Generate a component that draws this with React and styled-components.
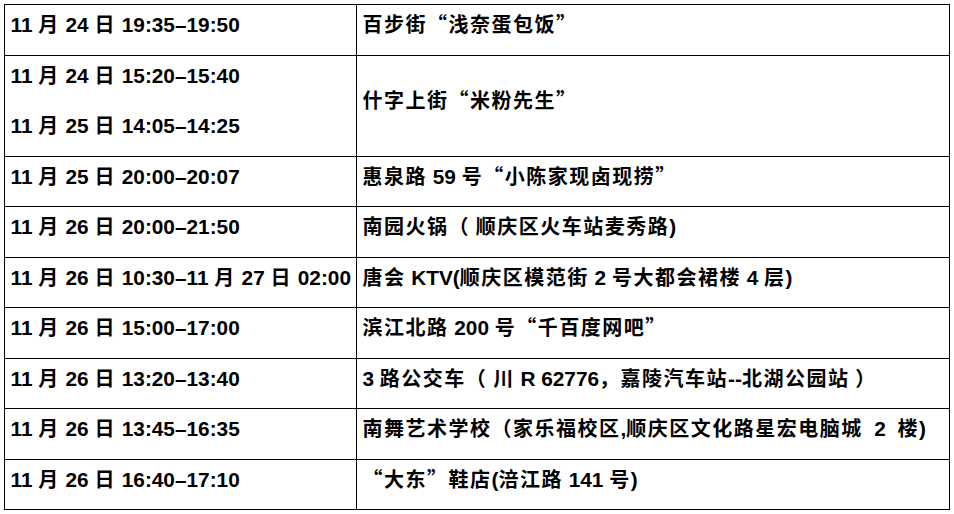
import React from 'react';
import styled, { createGlobalStyle } from 'styled-components';

const GlobalStyle = createGlobalStyle`
  html, body {
    margin: 0;
    padding: 0;
    background: #fff;
  }
  body {
    font-family: "Liberation Sans", Arial, "Noto Sans CJK SC", sans-serif;
    color: #000;
  }
`;

const Page = styled.div`
  padding: 4px;
`;

const Table = styled.div`
  width: 946px;
  box-sizing: border-box;
  border: 1px solid #000;
  border-bottom: none;
`;

const Row = styled.div`
  display: grid;
  grid-template-columns: 352px 1fr;
  height: ${(p) => p.span * 50.5}px;
  box-sizing: border-box;
  border-bottom: 1px solid #000;
`;

const Cell = styled.div`
  display: flex;
  flex-direction: column;
  justify-content: ${(p) => (p.center ? 'center' : 'flex-start')};
  box-sizing: border-box;
  padding-left: 5.5px;
  border-right: ${(p) => (p.divider ? '1px solid #000' : 'none')};
  overflow: visible;
`;

const Para = styled.div`
  height: 50px;
  flex: none;
  box-sizing: border-box;
  padding-top: 7px;
  font-size: 20.8px;
  line-height: 24px;
  font-weight: 700;
  white-space: pre;
`;

const Han = styled.span`
  font-family: "Noto Sans CJK SC", sans-serif;
  font-size: 20px;
  letter-spacing: 1.5px;
`;

const hanRun = /([\u2018-\u201d\u3000-\u303f\u3400-\u9fff\uff00-\uffef]+)/;

function Text({ children }) {
  return children
    .split(hanRun)
    .map((part, i) => (i % 2 ? <Han key={i}>{part}</Han> : part));
}

const rows = [
  { times: ['11 月 24 日 19:35–19:50'], place: '百步街“浅奈蛋包饭”' },
  {
    times: ['11 月 24 日 15:20–15:40', '11 月 25 日 14:05–14:25'],
    place: '什字上街“米粉先生”',
  },
  { times: ['11 月 25 日 20:00–20:07'], place: '惠泉路 59 号“小陈家现卤现捞”' },
  { times: ['11 月 26 日 20:00–21:50'], place: '南园火锅（ 顺庆区火车站麦秀路)' },
  {
    times: ['11 月 26 日 10:30–11 月 27 日 02:00'],
    place: '唐会 KTV(顺庆区模范街 2 号大都会裙楼 4 层)',
  },
  { times: ['11 月 26 日 15:00–17:00'], place: '滨江北路 200 号“千百度网吧”' },
  {
    times: ['11 月 26 日 13:20–13:40'],
    place: '3 路公交车（ 川 R 62776，嘉陵汽车站--北湖公园站 ）',
  },
  {
    times: ['11 月 26 日 13:45–16:35'],
    place: '南舞艺术学校（家乐福校区,顺庆区文化路星宏电脑城  2  楼)',
  },
  { times: ['11 月 26 日 16:40–17:10'], place: '“大东”鞋店(涪江路 141 号)' },
];

export default function App() {
  return (
    <>
      <GlobalStyle />
      <Page>
        <Table>
          {rows.map((row, i) => (
            <Row key={i} span={row.times.length}>
              <Cell divider>
                {row.times.map((t) => (
                  <Para key={t}>
                    <Text>{t}</Text>
                  </Para>
                ))}
              </Cell>
              <Cell center={row.times.length > 1}>
                <Para>
                  <Text>{row.place}</Text>
                </Para>
              </Cell>
            </Row>
          ))}
        </Table>
      </Page>
    </>
  );
}
